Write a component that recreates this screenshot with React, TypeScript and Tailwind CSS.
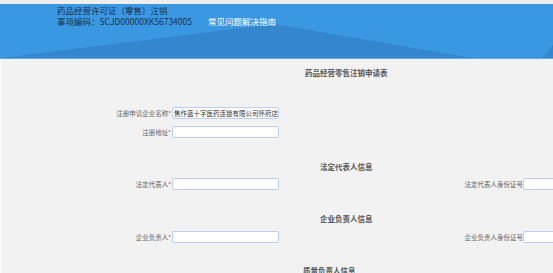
import React from 'react';

const font = { fontFamily: '"Noto Sans CJK SC", "Noto Sans", sans-serif' };

const Field: React.FC<{ label: string; value?: string; right?: string }> = ({ label, value, right }) => (
  <div className="flex items-center h-[12px]">
    <div className="w-[170px] shrink-0 text-right text-[6.5px] leading-[12px] text-[#666] pr-[1px]">
      {label}
      <span className="text-[#e33] text-[6px]">*</span>
    </div>
    <div className="w-[107px] shrink-0 h-[12px] bg-white border border-[#b9d1ee] rounded-[2px] px-[1px] text-[6.5px] leading-[10px] text-[#333] overflow-hidden whitespace-nowrap">
      {value}
    </div>
    {right && (
      <>
        <div className="w-[244px] text-right text-[6.5px] leading-[12px] text-[#666] shrink-0">{right}</div>
        <div className="w-[60px] h-[12px] bg-white border border-[#b9d1ee] rounded-[2px] shrink-0" />
      </>
    )}
  </div>
);

const Section: React.FC<{ title: string; pl: string; mt: string }> = ({ title, pl, mt }) => (
  <div className={`${mt} ${pl} h-[12px] text-[7.5px] leading-[12px] font-bold text-[#555]`}>{title}</div>
);

export default function App() {
  return (
    <div className="w-[553px] h-[273px] overflow-hidden bg-[#f2f2f2]" style={font}>
      <div className="h-[4px] bg-[#eeeeee]" />

      {/* Header */}
      <div className="relative h-[55px] bg-[#3a98e3] border-b border-[#5eaced]">
        <svg className="absolute inset-0" width="553" height="54" viewBox="0 0 553 54">
          <polygon points="0,54 274,20 472,54" fill="#3486ce" />
          <polygon points="542,54 553,41 553,54" fill="#3486ce" />
        </svg>
        <div className="relative pl-[57px] pt-[1px] text-[8.5px] leading-[11px] text-[#1c3049]">
          <div>药品经营许可证（零售）注销</div>
          <div className="flex">
            <span>事项编码：SCJD00000XK56734005</span>
            <span className="ml-[16px] text-white">常见问题解决指南</span>
          </div>
        </div>
      </div>

      {/* Form */}
      <div className="border-l-2 border-[#f9f9f9] h-full overflow-hidden">
        <div className="pt-[8px] pl-[303px] h-[20px] text-[7.5px] leading-[12px] font-bold text-[#555]">
          药品经营零售注销申请表
        </div>

        <div className="mt-[28px]">
          <Field label="注册申请企业名称" value="焦作蓝十字医药连锁有限公司怀府店" />
        </div>
        <div className="mt-[7px]">
          <Field label="注册地址" />
        </div>

        <Section title="法定代表人信息" pl="pl-[318px]" mt="mt-[23px]" />
        <div className="mt-[5px]">
          <Field label="法定代表人" right="法定代表人身份证号" />
        </div>

        <Section title="企业负责人信息" pl="pl-[318px]" mt="mt-[23px]" />
        <div className="mt-[6px]">
          <Field label="企业负责人" right="企业负责人身份证号" />
        </div>

        <Section title="质量负责人信息" pl="pl-[301px]" mt="mt-[22px]" />
      </div>
    </div>
  );
}
